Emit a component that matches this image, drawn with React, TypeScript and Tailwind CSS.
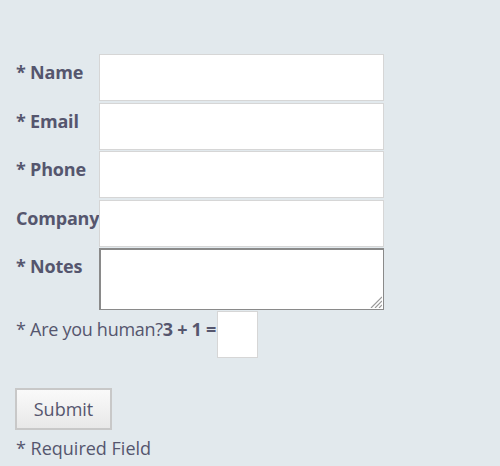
import React from 'react';

const fields = [
  { label: '* Name', type: 'text' },
  { label: '* Email', type: 'text' },
  { label: '* Phone', type: 'text' },
  { label: 'Company', type: 'text' },
];

const App = () => {
  return (
    <div className="min-h-[466px] w-[500px] bg-[#e2e9ed] pt-[54px] pl-[16px] text-[#55566e]" style={{ fontFamily: "'Open Sans', 'Liberation Sans', sans-serif" }}>
      <form className="flex flex-col" onSubmit={(e) => e.preventDefault()}>
        {fields.map((f) => (
          <div key={f.label} className="flex items-start h-[48.5px]">
            <label className="w-[83px] pt-[4px] text-[18px] font-bold leading-[28px] tracking-[-0.2px] whitespace-nowrap">{f.label}</label>
            <input type={f.type} className="w-[285px] h-[47px] bg-white border border-[#d6d6d6] outline-none" />
          </div>
        ))}
        <div className="flex items-start">
          <label className="w-[83px] pt-[4px] text-[18px] font-bold leading-[28px] tracking-[-0.2px]">* Notes</label>
          <div className="relative">
            <textarea className="block w-[285px] h-[62px] bg-white border border-t-2 border-l-2 border-[#8a8a8a] outline-none resize-none" />
            {/* resize grip */}
            <svg className="absolute right-[2px] bottom-[2px]" width="12" height="12" viewBox="0 0 12 12">
              <path d="M12 1 L1 12 M12 5 L5 12 M12 9 L9 12" stroke="#9a9a9a" strokeWidth="1.2" />
            </svg>
          </div>
        </div>
        <div className="flex items-start mt-[1px]">
          <span className="pt-[4px] text-[18px] leading-[28px] tracking-[-0.28px]">* Are you human?<b>3 + 1 =</b></span>
          <input type="text" className="ml-[1px] w-[41px] h-[47px] bg-white border border-[#d6d6d6] outline-none" />
        </div>
        <div className="mt-[30px]">
          <button type="submit" className="-ml-[1px] w-[97px] h-[42px] text-[18px] text-[#55566e] border-2 border-[#c8c8c8] bg-gradient-to-b from-[#fafafa] to-[#e8e8e8]">Submit</button>
        </div>
        <p className="mt-[4px] text-[18px] leading-[28px]">* Required Field</p>
      </form>
    </div>
  );
};

export default App;
